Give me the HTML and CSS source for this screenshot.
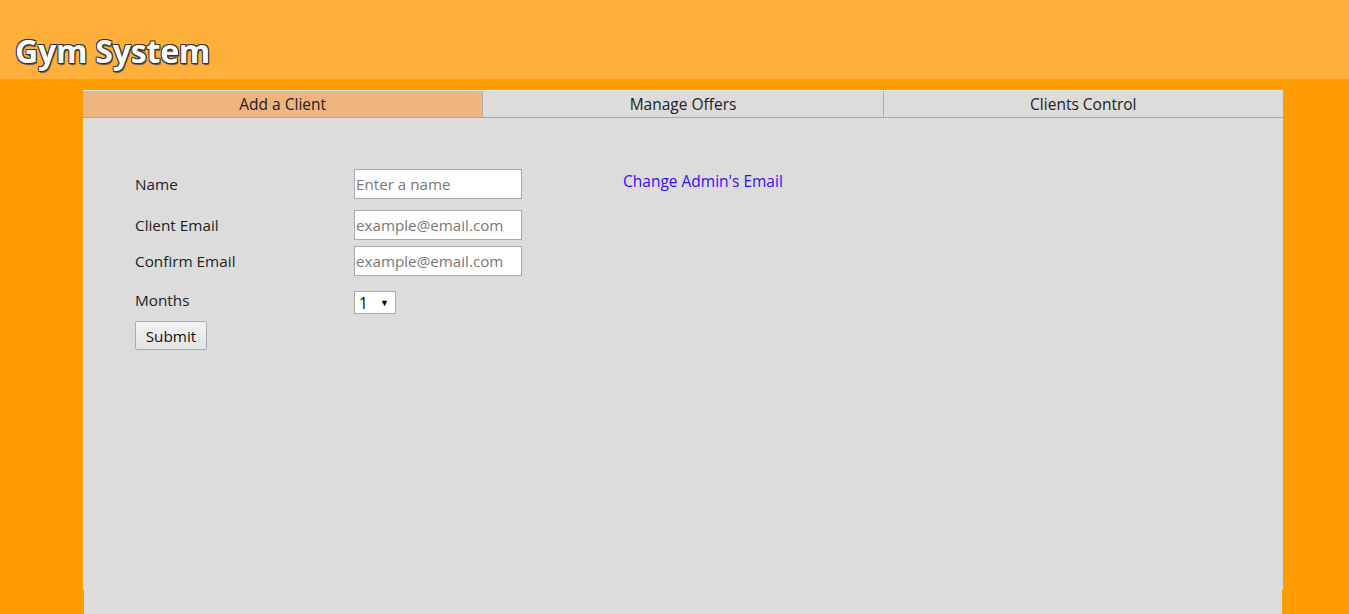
FILE: index.html
```html
<!DOCTYPE html>
<html lang="en">
<head>
<meta charset="utf-8">
<title>Gym System</title>
<link rel="stylesheet" href="styles.css">
</head>
<body>
<header class="site-header">
  <h1 class="site-title">Gym System</h1>
</header>
<main class="panel">
  <nav class="tabs">
    <a class="tab tab-active">Add a Client</a>
    <a class="tab">Manage Offers</a>
    <a class="tab">Clients Control</a>
  </nav>
  <section class="content">
    <form class="client-form">
      <div class="row row-name">
        <label class="label">Name</label>
        <input class="field" type="text" placeholder="Enter a name">
      </div>
      <div class="row row-email">
        <label class="label">Client Email</label>
        <input class="field" type="text" placeholder="example@email.com">
      </div>
      <div class="row row-confirm">
        <label class="label">Confirm Email</label>
        <input class="field" type="text" placeholder="example@email.com">
      </div>
      <div class="row row-months">
        <label class="label label-months">Months</label>
        <div class="select-wrap">
          <select class="select">
            <option>1</option>
            <option>2</option>
            <option>3</option>
          </select>
          <span class="select-arrow">▼</span>
        </div>
      </div>
      <button class="submit" type="button">Submit</button>
    </form>
    <a class="admin-link" href="#">Change Admin's Email</a>
  </section>
</main>
<div class="panel-foot"></div>
</body>
</html>
```
FILE: styles.css
```css
html, body {
  margin: 0;
  padding: 0;
}
body {
  background: #ff9c00;
  font-family: "Open Sans", "Noto Sans", sans-serif;
  color: #222;
  overflow: hidden;
  height: 614px;
}
.site-header {
  background: #ffb03b;
  height: 79px;
  display: flex;
  align-items: flex-end;
  padding-left: 15px;
}
.site-title {
  margin: 0 0 8px 0;
  font-family: "Open Sans", sans-serif;
  font-weight: 700;
  font-size: 32px;
  letter-spacing: -0.2px;
  color: #fff;
  line-height: 40px;
  text-shadow: -1px -1px 0 #333, 1px -1px 0 #333, -1px 1px 0 #333, 1px 1px 0 #333, 1px 2px 1px #555;
}
.panel {
  margin: 11px 0 0 83px;
  width: 1200px;
  height: 500px;
  background: #dcdcdc;
}
.panel-foot {
  margin-left: 84px;
  width: 1198px;
  height: 40px;
  background: #dcdcdc;
}
.tabs {
  display: flex;
  border-top: 1px solid #eaeaea;
  border-bottom: 1px solid #a9a9a9;
  box-sizing: border-box;
  height: 28px;
}
.tab {
  flex: 1;
  text-align: center;
  font-size: 15.5px;
  line-height: 27px;
  color: #222;
  border-left: 1px solid #b0b0b0;
}
.tab:first-child {
  border-left: none;
}
.tab-active {
  background: #efb580;
}
.content {
  display: flex;
  align-items: flex-start;
  padding: 51px 0 0 52px;
}
.client-form {
  display: flex;
  flex-direction: column;
  width: 387px;
}
.row {
  display: flex;
  align-items: center;
  height: 30px;
}
.row-email { margin-top: 11px; }
.row-confirm { margin-top: 6px; }
.row-months { margin-top: 15px; height: 23px; align-items: flex-start; }
.label {
  width: 219px;
  font-size: 15.3px;
  color: #222;
}
.label-months {
  line-height: 18px;
}
.field {
  width: 168px;
  height: 30px;
  box-sizing: border-box;
  border: 1px solid #a9a9a9;
  background: #fff;
  padding: 0 1px;
  font-family: inherit;
  font-size: 15.2px;
  color: #222;
  outline: none;
}
.field::placeholder {
  color: #777;
}
.select-wrap {
  position: relative;
  width: 42px;
  height: 23px;
}
.select {
  appearance: none;
  -webkit-appearance: none;
  width: 42px;
  height: 23px;
  border: 1px solid #a9a9a9;
  border-radius: 0;
  background: #fff;
  font-family: inherit;
  font-size: 15.5px;
  padding: 0 0 0 4px;
  color: #000;
  margin: 0;
}
.select-arrow {
  position: absolute;
  right: 7px;
  top: 5px;
  font-size: 9px;
  color: #000;
  pointer-events: none;
}
.submit {
  margin-top: 7px;
  align-self: flex-start;
  width: 72px;
  height: 29px;
  border: 1px solid #acacac;
  border-radius: 2px;
  background: linear-gradient(#f2f2f2, #e3e3e3);
  font-family: inherit;
  font-size: 15.3px;
  color: #111;
  padding: 0;
}
.admin-link {
  margin: 1px 0 0 101px;
  font-size: 15.5px;
  color: #3311ee;
  text-decoration: none;
}
```
